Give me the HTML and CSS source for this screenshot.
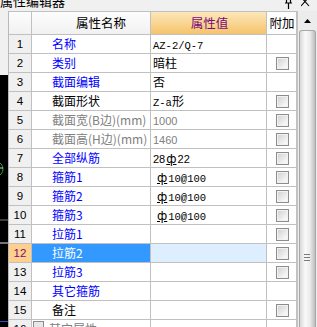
FILE: index.html
```html
<!DOCTYPE html>
<html>
<head>
<meta charset="utf-8">
<link rel="stylesheet" href="styles.css">
</head>
<body>
<div class="panel">
  <div class="titlebar">
    <span class="title">属性编辑器</span>
    <span class="tools">
      <svg class="pin" width="9" height="9" viewBox="0 0 9 9"><path d="M1 3H8M2.5 -2V3M6.5 -2V3M4.5 3V9" stroke="#000" stroke-width="1.2" fill="none"/></svg>
      <svg class="close" width="9" height="9" viewBox="0 0 9 9"><path d="M0 -3L8 6M8 -3L0 6" stroke="#000" stroke-width="1.1" fill="none"/></svg>
    </span>
  </div>
  <div class="main">
    <svg class="strip" width="8" height="316" viewBox="0 0 8 316">
      <rect x="0" y="0" width="8" height="64" fill="#f0f0f0"/>
      <rect x="0" y="64" width="8" height="252" fill="#000"/>
      <path d="M-3 151A6 7 0 0 1 3 158A6 7 0 0 1 -3 165" stroke="#1fae2a" stroke-width="1" fill="none"/>
      <path d="M0 157H3" stroke="#cfcfcf" stroke-width="1"/>
      <rect x="0" y="208.5" width="8" height="1" fill="#7a7a7a"/>
      <rect x="0" y="231.5" width="8" height="1" fill="#e8e8e8"/>
      <rect x="0" y="310" width="8" height="1" fill="#3050c0"/>
    </svg>
    <div class="grid">
      <div class="row head">
        <div class="c num"></div>
        <div class="c name">属性名称</div>
        <div class="c val">属性值</div>
        <div class="c ext">附加</div>
      </div>
      <div class="row"><div class="c num">1</div><div class="c name blue">名称</div><div class="c val"><span class="mono">AZ-2/Q-7</span></div><div class="c ext"></div></div>
      <div class="row"><div class="c num">2</div><div class="c name blue">类别</div><div class="c val">暗柱</div><div class="c ext"><span class="cb"></span></div></div>
      <div class="row"><div class="c num">3</div><div class="c name blue">截面编辑</div><div class="c val">否</div><div class="c ext"></div></div>
      <div class="row"><div class="c num">4</div><div class="c name">截面形状</div><div class="c val"><span class="mono">Z-a</span>形</div><div class="c ext"><span class="cb"></span></div></div>
      <div class="row"><div class="c num">5</div><div class="c name grey">截面宽(B边)(mm)</div><div class="c val"><span class="sans grey">1000</span></div><div class="c ext"><span class="cb"></span></div></div>
      <div class="row"><div class="c num">6</div><div class="c name grey">截面高(H边)(mm)</div><div class="c val"><span class="sans grey">1460</span></div><div class="c ext"><span class="cb"></span></div></div>
      <div class="row"><div class="c num">7</div><div class="c name blue">全部纵筋</div><div class="c val"><span class="sans">28<span class="steel">ф</span>22</span></div><div class="c ext"><span class="cb"></span></div></div>
      <div class="row"><div class="c num">8</div><div class="c name blue">箍筋1</div><div class="c val"><span class="mono lead"><span class="steel">ф</span>10@100</span></div><div class="c ext"><span class="cb"></span></div></div>
      <div class="row"><div class="c num">9</div><div class="c name blue">箍筋2</div><div class="c val"><span class="mono lead"><span class="steel">ф</span>10@100</span></div><div class="c ext"><span class="cb"></span></div></div>
      <div class="row"><div class="c num">10</div><div class="c name blue">箍筋3</div><div class="c val"><span class="mono lead"><span class="steel">ф</span>10@100</span></div><div class="c ext"><span class="cb"></span></div></div>
      <div class="row"><div class="c num">11</div><div class="c name blue">拉筋1</div><div class="c val"></div><div class="c ext"><span class="cb"></span></div></div>
      <div class="row sel"><div class="c num">12</div><div class="c name">拉筋2</div><div class="c val"></div><div class="c ext"><span class="cb"></span></div></div>
      <div class="row"><div class="c num">13</div><div class="c name blue">拉筋3</div><div class="c val"></div><div class="c ext"><span class="cb"></span></div></div>
      <div class="row"><div class="c num">14</div><div class="c name blue">其它箍筋</div><div class="c val"></div><div class="c ext"></div></div>
      <div class="row"><div class="c num">15</div><div class="c name">备注</div><div class="c val"></div><div class="c ext"><span class="cb"></span></div></div>
      <div class="row group"><div class="c num">16</div><div class="c name grey"><span class="exp"></span>其它属性</div><div class="c val"></div><div class="c ext"></div></div>
    </div>
    <div class="scroll">
      <div class="upbtn"><svg width="7" height="4" viewBox="0 0 7 4"><path d="M0 4L3.5 0L7 4Z" fill="#000"/></svg></div>
      <div class="thumb">
        <span class="grip"></span>
      </div>
    </div>
  </div>
</div>
</body>
</html>
```
FILE: styles.css
```css
html, body {
  margin: 0;
  padding: 0;
}
body {
  width: 317px;
  height: 327px;
  overflow: hidden;
  background: #f0f0f0;
  font-family: "Noto Sans CJK SC", sans-serif;
}
.panel {
  width: 317px;
  height: 327px;
  display: flex;
  flex-direction: column;
}
.titlebar {
  height: 11px;
  overflow: hidden;
  display: flex;
  justify-content: space-between;
  align-items: flex-start;
}
.title {
  font-size: 13px;
  line-height: 13px;
  margin-top: -6px;
  color: #000;
}
.tools {
  display: flex;
  gap: 8px;
  padding-right: 7px;
}
.tools svg {
  display: block;
}
.main {
  flex: 1;
  display: flex;
  overflow: hidden;
}
.strip {
  display: block;
  flex: none;
}
.grid {
  width: 289px;
  flex: none;
  border-left: 1px solid #b9b9b9;
  box-sizing: border-box;
}
.row {
  display: grid;
  grid-template-columns: 23px 119px 116px 30px;
  height: 19px;
  box-sizing: border-box;
  border-bottom: 1px solid #c0c0c0;
  background: #fff;
}
.row.head {
  height: 24px;
  border-top: 1px solid #c0c0c0;
}
.c {
  border-right: 1px solid #c0c0c0;
  box-sizing: border-box;
  font-size: 12px;
  line-height: 18px;
  white-space: nowrap;
  overflow: hidden;
  color: #000;
}
.head .c {
  line-height: 22px;
  text-align: center;
  background: linear-gradient(#fdfdfd, #f1f1f1);
  font-size: 12.5px;
}
.head .c.val {
  background: linear-gradient(#fde7b9, #f4c46c);
  color: #7b0a7e;
}
.head .c.ext {
  background: #fdfdfd;
  text-align: left;
  padding-left: 1px;
}
.num {
  background: #f0f0f0;
  text-align: center;
  font-family: "Liberation Sans", sans-serif;
  font-size: 11.5px;
}
.name {
  padding-left: 20px;
}
.val {
  padding-left: 2px;
}
.ext {
  display: flex;
  align-items: center;
  justify-content: center;
  padding-left: 1px;
}
.blue { color: #0000ff; }
.grey { color: #808080; }
.mono {
  font-family: "Liberation Mono", monospace;
  font-size: 10.5px;
}
.sans {
  font-family: "Liberation Sans", sans-serif;
  font-size: 11px;
}
.lead {
  padding-left: 3px;
}
.steel {
  font-family: "DejaVu Sans", sans-serif;
  font-size: 12px;
  text-decoration: underline;
  text-underline-offset: 1px;
  padding: 0 1px;
}
.cb {
  width: 13px;
  height: 13px;
  box-sizing: border-box;
  border: 1px solid #8c8c8c;
  box-shadow: inset 0 0 0 1px #f2f2f2;
  background: linear-gradient(135deg, #cfcfcf, #f7f7f7 80%);
}
.row.sel .num {
  background: #fdd18b;
  color: #7b0a7e;
}
.row.sel .name {
  background: #3399ff;
  color: #fff;
}
.row.sel .val {
  background: #ddeeff;
}
.row.group .name {
  padding-left: 1px;
  display: flex;
  align-items: flex-start;
}
.exp {
  width: 11px;
  height: 11px;
  box-sizing: border-box;
  border: 1px solid #8c8c8c;
  background: #e8e8e8;
  margin: 1px 5px 0 0;
}
.scroll {
  width: 20px;
  flex: none;
  box-sizing: border-box;
  border-left: 1px solid #c4c4c4;
  background: #ececec;
  padding: 1px 0 0 1px;
  display: flex;
  flex-direction: column;
  gap: 1px;
}
.upbtn {
  height: 17px;
  display: flex;
  align-items: center;
  justify-content: center;
  padding-right: 2px;
}
.upbtn svg {
  display: block;
}
.thumb {
  flex: 1;
  margin-right: 1px;
  border: 1px solid #a8a8a8;
  border-bottom: none;
  border-radius: 3px 3px 0 0;
  background: linear-gradient(90deg, #d8d8d8, #fafafa 35%, #ececec 65%, #bdbdbd);
  position: relative;
}
.grip {
  position: absolute;
  left: 4px;
  top: 223px;
  width: 6px;
  height: 7px;
  background: repeating-linear-gradient(#7c7c7c 0 1px, transparent 1px 3px);
}
```
